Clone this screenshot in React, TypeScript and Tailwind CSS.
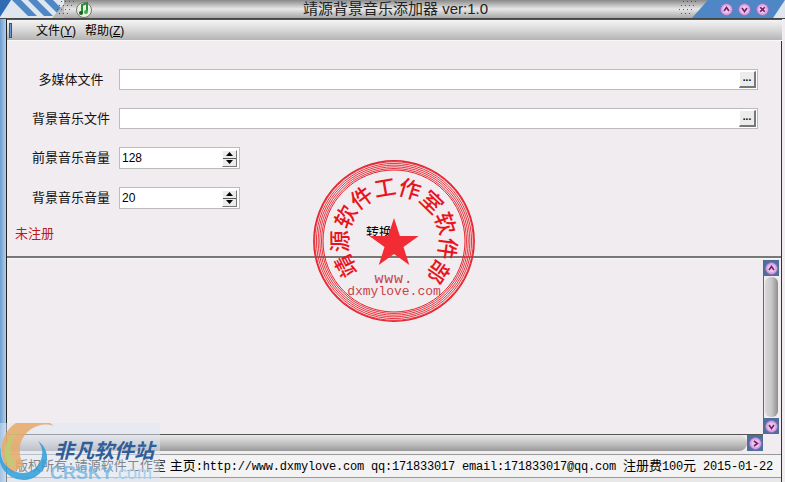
import React from "react";

const cjk = "font-['Liberation_Sans','Noto_Sans_CJK_SC',sans-serif]";
const mono = "font-['Liberation_Mono','Noto_Sans_CJK_SC',monospace]";

function RoundBtn({ d, size = 13 }: { d: string; size?: number }) {
  return (
    <svg width={size} height={size} viewBox="0 0 13 13" className="block shrink-0">
      <circle cx="6.5" cy="6.5" r="6" fill="#d9a6e0" stroke="#8f6fc0" />
      <circle cx="6.5" cy="6.5" r="3.8" fill="#e8c8ec" />
      <path d={d} fill="none" stroke="#7a1f70" strokeWidth="1.6" />
    </svg>
  );
}

const UP = "M4 8 L6.5 4.5 L9 8";
const DOWN = "M4 5 L6.5 8.5 L9 5";
const RIGHT = "M5 4 L8.5 6.5 L5 9";
const CLOSE = "M4.2 4.2 L8.8 8.8 M8.8 4.2 L4.2 8.8";

function Dots() {
  return (
    <svg width="22" height="16" viewBox="0 0 22 16" className="block">
      {[[5, 1], [9, 1], [13, 1], [17, 1], [3, 5], [7, 5], [11, 5], [15, 5], [1, 9], [5, 9], [9, 9], [13, 9], [3, 13], [7, 13], [11, 13]].map(([x, y], i) => (
        <rect key={i} x={x} y={y} width="1" height="1" fill="#555" />
      ))}
    </svg>
  );
}

function TitleBar() {
  return (
    <div className="flex h-[19px] shrink-0 bg-gradient-to-b from-[#8a8a8a] via-[#e8e8e8] to-[#a8a8a8] border-b border-[#444]">
      <svg width="64" height="18" viewBox="0 0 64 18" className="block shrink-0">
        <rect width="64" height="18" fill="#dfe6ee" />
        {[12, 28, 44].map((x) => (
          <path key={x} d={`M${x} 0H${x + 9}L${x + 25} 16H${x + 16}Z`} fill="#4f86c6" />
        ))}
        <path d="M0 0H11L0 17Z" fill="#2f6cb4" />
        <path d="M52 18L64 4V18Z" fill="#b8b8b8" />
      </svg>
      <div className="-ml-[8px] flex items-start"><Dots /></div>
      <svg width="18" height="18" viewBox="0 0 18 18" className="block shrink-0 -ml-[3px]">
        <ellipse cx="9" cy="10" rx="7.5" ry="7.5" fill="#e6f2e0" stroke="#777" />
        <path d="M7 13V5L12 3V11" fill="none" stroke="#2c8a35" strokeWidth="2" />
        <circle cx="6" cy="13" r="2" fill="#1d5c26" />
        <circle cx="11" cy="12" r="2" fill="#3fae4c" />
      </svg>
      <div className={`flex-1 pl-[20px] text-center text-[15px] leading-[18px] text-[#222] ${cjk}`}>靖源背景音乐添加器 ver:1.0</div>
      <div className="-mr-[8px] z-0"><Dots /></div>
      <div className="relative flex w-[93px] shrink-0 items-center justify-end gap-[5px] pr-[16px] bg-[#4f86c6] [clip-path:polygon(16px_0,100%_0,100%_100%,0_100%)]">
        <RoundBtn d={UP} />
        <RoundBtn d={DOWN} />
        <RoundBtn d={CLOSE} />
        <svg width="14" height="18" viewBox="0 0 14 18" className="absolute right-0 top-0">
          <path d="M14 0V18H2Z" fill="#dfe6ee" />
        </svg>
      </div>
    </div>
  );
}

function MenuBar() {
  return (
    <div className="flex h-[22px] shrink-0 items-center bg-gradient-to-b from-[#f4f4f4] via-[#d8d8d8] to-[#b4b4b4] border-t border-[#555] border-b border-b-[#f8f8f8]">
      <div className="ml-[2px] h-[15px] w-[3px] bg-[#6f9ad0] border border-[#34547c]" />
      <div className={`ml-[24px] flex gap-[9px] pt-[2px] text-[12px] text-black ${cjk}`}>
        <span>文件(<u>Y</u>)</span>
        <span>帮助(<u>Z</u>)</span>
      </div>
    </div>
  );
}

function Spin({ value }: { value: string }) {
  return (
    <div className="flex h-[22px] w-[121px] items-center border border-[#bcbcbc] bg-white pl-[2px] pr-[2px]">
      <span className={`flex-1 text-[12px] leading-[18px] text-black ${cjk}`}>{value}</span>
      <div className="flex h-[17px] w-[15px] flex-col border-r border-b border-[#777] bg-[#ececec] border-t border-t-white border-l border-l-white">
        <div className="flex flex-1 items-center justify-center border-b border-[#555]">
          <svg width="7" height="4" viewBox="0 0 7 4"><path d="M3.5 0L7 4H0Z" fill="#000" /></svg>
        </div>
        <div className="flex flex-1 items-center justify-center">
          <svg width="7" height="4" viewBox="0 0 7 4"><path d="M0 0H7L3.5 4Z" fill="#000" /></svg>
        </div>
      </div>
    </div>
  );
}

function Label({ children }: { children: string }) {
  return <div className={`w-[112px] pl-[16px] text-center text-[13px] text-[#111] ${cjk}`}>{children}</div>;
}

function PathRow({ label }: { label: string }) {
  return (
    <div className="flex h-[21px] items-center">
      <Label>{label}</Label>
      <div className="flex h-[21px] w-[639px] items-center justify-end border border-[#bcbcbc] bg-white pr-[1px]">
        <div className="flex h-[17px] w-[17px] items-center justify-center border-r-2 border-b-2 border-[#777] border-t border-l border-t-white border-l-white bg-[#ececec] text-[10px] leading-none font-bold text-black">
          <span className="-mt-[3px] font-['Liberation_Sans',sans-serif]">...</span>
        </div>
      </div>
    </div>
  );
}

function Stamp() {
  const star: string[] = [];
  for (let i = 0; i < 10; i++) {
    const r = i % 2 === 0 ? 26 : 10;
    const a = (-90 + i * 36) * (Math.PI / 180);
    star.push(`${(81 + r * Math.cos(a)).toFixed(1)},${(84 + r * Math.sin(a)).toFixed(1)}`);
  }
  const rings = [];
  for (let i = 0; i < 5; i++) rings.push(<circle key={i} cx="81" cy="81" r={72.5 + i * 1.7} fill="none" stroke="#e8232d" strokeWidth="0.9" />);
  return (
    <svg width="162" height="162" viewBox="0 0 162 162" className="absolute left-[313px] top-[160px] z-10 pointer-events-none">
      <defs>
        <path id="stamp-arc" d="M 46.3 111.2 A 46 46 0 1 1 111.8 115.2" />
      </defs>
      <circle cx="81" cy="81" r="80.2" fill="none" stroke="#e8232d" strokeWidth="1.4" />
      {rings}
      <circle cx="81" cy="81" r="71" fill="none" stroke="#e8232d" strokeWidth="1" />
      <text fill="#e8141e" fontSize="22" fontWeight="500" fontFamily="'Liberation Serif','Noto Sans CJK SC',serif">
        <textPath href="#stamp-arc" textLength="216" lengthAdjust="spacing">靖源软件工作室软件部</textPath>
      </text>
      <polygon points={star.join(" ")} fill="#f22c35" />
      <text x="81" y="123" textAnchor="middle" fill="#c9434a" fontSize="15" letterSpacing="0.8" fontFamily="'Liberation Mono',monospace">www.</text>
      <text x="81" y="135" textAnchor="middle" fill="#c9434a" fontSize="13" fontFamily="'Liberation Mono',monospace">dxmylove.com</text>
    </svg>
  );
}

function Watermark() {
  return (
    <div className="absolute left-0 top-[423px] z-20 h-[59px] w-[160px] bg-[#dfe8f4]/50 pointer-events-none">
      <svg width="60" height="59" viewBox="0 0 60 59" className="absolute left-0 top-0">
        <path d="M12 50 A28 28 0 0 1 54 3 A26 26 0 0 0 24 42Z" fill="#e8a868" opacity="0.85" />
        <path d="M8 42 A24 24 0 0 1 18 8 A26 26 0 0 0 16 42Z" fill="#b8cf72" opacity="0.8" />
        <path d="M1 24 A24 24 0 0 0 42 48 A20 20 0 0 0 38 18 A20 20 0 0 1 24 50 A22 22 0 0 1 1 24Z" fill="#2f9fd8" opacity="0.85" />
      </svg>
      <div className={`absolute left-[54px] top-[16px] text-[20px] leading-[24px] font-bold italic text-[#2f5d9a] ${cjk} whitespace-nowrap`}>非凡软件站</div>
      <div className="absolute left-[50px] top-[41px] text-[18px] leading-[18px] font-bold text-[#6fb2de]/75 font-['Liberation_Sans',sans-serif] whitespace-nowrap">CRSKY<span className="font-normal text-[#a9cfe8]">.com</span></div>
    </div>
  );
}

export default function App() {
  return (
    <div className="relative flex h-[482px] w-[785px] overflow-hidden bg-[#f0ecef]">
      <div className="w-[6px] shrink-0 bg-gradient-to-r from-[#6a9ed2] to-[#b4d0ea]" />
      <div className="flex min-w-0 flex-1 flex-col border-l border-[#222]">
        <div className="-ml-[7px] flex flex-col">
          <TitleBar />
          <div className="ml-[7px] mr-[3px] flex flex-col"><MenuBar /></div>
        </div>
        <div className="mr-[3px] flex min-h-0 flex-1 flex-col border-r border-[#333]">
          <div className="flex h-[215px] shrink-0 flex-col gap-[18px] pt-[28px]">
            <PathRow label="多媒体文件" />
            <PathRow label="背景音乐文件" />
            <div className="flex h-[22px] items-center">
              <Label>前景音乐音量</Label>
              <Spin value="128" />
            </div>
            <div className="flex h-[22px] items-center">
              <Label>背景音乐音量</Label>
              <Spin value="20" />
            </div>
            <div className={`-mt-[2px] relative flex h-[18px] items-center pl-[8px] text-[13px] text-[#c01818] ${cjk}`}>
              未注册
              <span className="absolute left-[359px] top-[1px] h-[10px] overflow-hidden text-[13px] leading-[12px] text-black">转换</span>
            </div>
          </div>
          <div className="h-[3px] shrink-0 border-t-2 border-[#777] bg-[#f8f8f8]" />
          <div className="flex min-h-0 flex-1">
            <div className="flex min-w-0 flex-1 flex-col">
              <div className="flex-1" />
              <div className="mb-[3px] flex h-[17px] shrink-0 border-t border-[#555]">
                <div className="flex-1 rounded-r-[8px] bg-gradient-to-b from-[#e8e8e8] via-[#c4c4c4] to-[#9a9a9a]" />
                <div className="flex h-[16px] w-[16px] items-center justify-center bg-[#4e6f9c]"><RoundBtn d={RIGHT} /></div>
              </div>
            </div>
            <div className="flex w-[18px] shrink-0 flex-col pb-[20px] pt-[1px]">
              <div className="flex h-full w-[16px] flex-col border-l border-[#666]">
                <div className="flex h-[16px] w-[15px] items-center justify-center bg-[#4e6f9c]"><RoundBtn d={UP} /></div>
                <div className="my-[1px] ml-[1px] w-[13px] flex-1 rounded-[6px] bg-gradient-to-r from-[#d8d8d8] via-[#c8c8c8] to-[#8e8e8e]" />
                <div className="flex h-[16px] w-[15px] items-center justify-center bg-[#4e6f9c]"><RoundBtn d={DOWN} /></div>
              </div>
            </div>
          </div>
          <div className={`flex h-[24px] shrink-0 items-center justify-between border-t border-b border-[#999] bg-[#f3f3f3] pl-[8px] pr-[8px] text-[12px] tracking-[-0.2px] leading-none text-black ${mono}`}>
            <span className="text-[13px] tracking-normal text-[#222]">版权所有:靖源软件工作室</span>
            <span className="whitespace-nowrap"><span className="text-[13px] tracking-normal">主页</span>:http://www.dxmylove.com qq:171833017 email:171833017@qq.com <span className="text-[13px] tracking-normal">注册费</span>100<span className="text-[13px] tracking-normal">元</span> 2015-01-22</span>
          </div>
          <div className="h-[4px] shrink-0 bg-[#e8e8e8]" />
        </div>
      </div>
      <Stamp />
      <Watermark />
    </div>
  );
}
